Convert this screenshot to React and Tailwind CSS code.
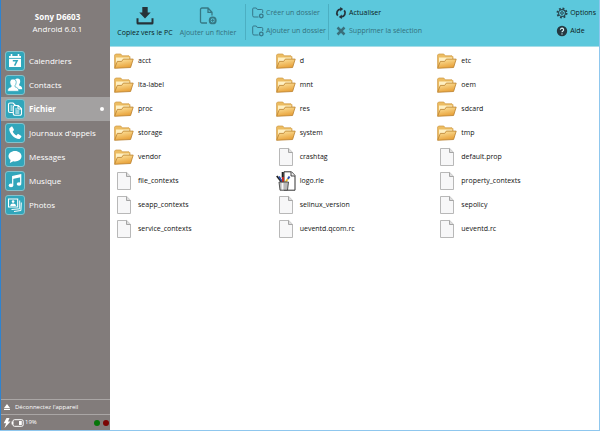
import React from "react";

function Download() {
  return (
    <svg viewBox="0 0 18 18" className="h-[18px] w-[18px]" fill="#263238">
      <path d="M6.3 0h5.4v5.5h3L9 11.6 3.3 5.5h3z" />
      <path d="M.5 11.3h2v3.9h13v-3.9h2V16a1.5 1.5 0 0 1-1.5 1.5H2A1.5 1.5 0 0 1 .5 16z" />
    </svg>
  );
}

function AddFile() {
  return (
    <svg viewBox="0 0 18 18" className="h-[18px] w-[18px]" fill="none" stroke="#367884" strokeWidth="1.3">
      <path d="M8 16H3a1.500 1.500 0 0 1-1.500-1.500V2.500A1.500 1.500 0 0 1 3 1h6l4 4.300V8.500M9 1v4.300h4" />
      <circle cx="13.700" cy="13.400" r="3" strokeWidth="1.900" />
      <path d="M13.700 11.800v3.200M12.100 13.400h3.200" strokeWidth="1" />
    </svg>
  );
}

function AddFolder() {
  return (
    <svg viewBox="0 0 12 12" className="h-3 w-3" fill="none" stroke="#36788a" strokeWidth="1">
      <path d="M6.500 10H2A1.300 1.300 0 0 1 .7 8.700V2A1 1 0 0 1 1.700 1h2.600l1 1.500h4.400a1 1 0 0 1 1 1V6" />
      <circle cx="9.300" cy="9" r="1.800" strokeWidth="1.300" />
    </svg>
  );
}

function Refresh() {
  return (
    <svg viewBox="0 0 12 12" className="h-3 w-3" fill="none" stroke="#26323a" strokeWidth="1.800">
      <path d="M2.800 8.700A4 4 0 0 1 6 2.100M9.200 3.300A4 4 0 0 1 6 9.900" />
      <path d="M5.200 0l3 2-3 2.400zM6.800 7.600l-3 2.300 3 2.100z" fill="#26323a" stroke="none" />
    </svg>
  );
}

function Cross() {
  return (
    <svg viewBox="0 0 12 12" className="h-3 w-3" stroke="#3a6f7b" strokeWidth="2.500">
      <path d="M2.500 2.500l7 7M9.500 2.500l-7 7" />
    </svg>
  );
}

function Gear() {
  return (
    <svg viewBox="0 0 12 12" className="h-3 w-3" fill="none" stroke="#26414a">
      <circle cx="6" cy="6" r="4.600" strokeWidth="1.800" strokeDasharray="1.806 1.806" />
      <circle cx="6" cy="6" r="3.400" strokeWidth="1.100" />
      <circle cx="6" cy="6" r="1.300" strokeWidth="1" />
    </svg>
  );
}

function Help() {
  return (
    <svg viewBox="0 0 12 12" className="h-3 w-3" fill="none">
      <circle cx="6" cy="6" r="5.200" fill="#253840" />
      <path d="M4.400 4.800a1.600 1.600 0 1 1 2.500 1.300c-.6.400-.9.600-.9 1.200" stroke="#d6f3f8" strokeWidth="1.200" />
      <circle cx="6" cy="8.900" r=".7" fill="#d6f3f8" />
    </svg>
  );
}

function FolderIcon() {
  return (
    <svg viewBox="0 0 20 16" className="h-4 w-5">
      <defs>
        <linearGradient id="folderFront" x1="0" y1="0" x2="0.400" y2="1">
          <stop offset="0" stopColor="#ffe9a6" />
          <stop offset="1" stopColor="#e8a23a" />
        </linearGradient>
      </defs>
      <path d="M.6 14.500V2l1-1h5.200l1.400 1.800H15l1 1V13z" fill="#edbd62" stroke="#cf9a45" strokeWidth=".7" />
      <path d="M2 4.500h13.200V12H2z" fill="#fff0c2" />
      <path d="M.6 15.300l2.700-6.900h4.400l1.600-2.300h9.900l-2.600 8.400z" fill="url(#folderFront)" stroke="#b97f2c" strokeWidth=".8" />
    </svg>
  );
}

function FileIcon() {
  return (
    <svg viewBox="0 0 20 20" className="h-5 w-5">
      <path d="M3.500 1.500h9.200l3.800 3.800v13.200h-13z" fill="#f7f7f8" stroke="#b0b0b0" strokeWidth=".9" />
      <path d="M12.500 1.500v4h4" fill="#ddd" stroke="#9d9d9d" strokeWidth=".9" />
    </svg>
  );
}

function ArtIcon() {
  return (
    <svg viewBox="0 0 20 20" className="h-5 w-5">
      <path d="M8 .8h7.500L19 4.500v14.700H8z" fill="#fff" stroke="#333" />
      <path d="M15 1v4h4" fill="#eee" stroke="#333" strokeWidth=".9" />
      <path d="M.8 5l4.700 6" stroke="#222" strokeWidth="1.800" />
      <path d="M3 5.500l3.500 5.500" stroke="#2c50ac" strokeWidth="1.600" />
      <path d="M6.700 1v6" stroke="#222" strokeWidth="2" />
      <path d="M7 6v5" stroke="#c82d25" strokeWidth="2" />
      <path d="M13.500 5.500L11.800 8" stroke="#2c50ac" strokeWidth="2" />
      <path d="M11.800 8L9.500 11" stroke="#e9bd2c" strokeWidth="1.800" />
      <path d="M3 11h9.500l-1 8.200H4z" fill="#b9b9b9" stroke="#444" strokeWidth=".9" />
      <path d="M6.500 12v6.500" stroke="#f6f6f6" strokeWidth="1.800" />
    </svg>
  );
}

const glyphs = {
  calendar: (
    <>
      <path d="M2 3h12v11H2z" fill="#fff" />
      <path d="M4.500 1v3M11.500 1v3" stroke="#fff" strokeWidth="1.600" />
      <path d="M2 5.400h12" stroke="#31a6bb" strokeWidth=".9" />
      <path d="M5.800 7.700h4.300L7.600 12.600" fill="none" stroke="#31a6bb" strokeWidth="1.500" />
    </>
  ),
  contacts: (
    <>
      <path d="M10.500 1.500c1.900 0 2.800 1.300 2.700 3 0 1.100-.4 2.200-1 2.800v1.200c2.100.8 3 1.600 3 3.700H8V2.700c.6-.8 1.400-1.200 2.500-1.200z" fill="#fff" />
      <path d="M6 2c2.200 0 3.300 1.500 3.200 3.500 0 1.300-.6 2.400-1.200 3.100v1.200c2.500.8 3.800 1.900 3.800 4.500H.5c0-2.600 1.100-3.700 3.600-4.500V8.600C3.400 7.900 2.900 6.800 2.900 5.500 2.800 3.500 3.900 2 6 2z" fill="#fff" stroke="#31a6bb" strokeWidth=".7" />
    </>
  ),
  file: (
    <g fill="none" stroke="#fff" strokeWidth="1.100">
      <path d="M6 11.500H3A1.500 1.500 0 0 1 1.500 10V3.500A1.500 1.500 0 0 1 3 2h3l2.500 2.500M3.500 5h2M3.500 7h2M3.500 9h2" />
      <path d="M7.500 4.500h3.700l3.300 3.200v5a1.500 1.500 0 0 1-1.500 1.500H7.800a1.500 1.500 0 0 1-1.500-1.500V6a1.500 1.500 0 0 1 1.200-1.500zM11 4.500V8h3.500M8.300 8h1.500M8.300 10h4M8.300 12h4" />
    </g>
  ),
  phone: (
    <path d="M4.200 1.800L2.300 3.500c-.5 4.700 5.500 10.900 10.200 10.500l1.800-2.100c.2-.5.100-.9-.3-1.200l-2.300-1.500c-.4-.3-.9-.2-1.200.1l-1 1.100C7.700 9.500 6.400 8.100 5.700 6.500l1-1.100c.3-.3.300-.7.100-1.100L5.500 2c-.3-.5-.8-.6-1.300-.2z" fill="#fff" />
  ),
  message: (
    <path d="M8 2c3.700 0 6.500 2.300 6.500 5.200S11.700 12.400 8 12.400c-.6 0-1.200 0-1.700-.2L2.800 14l.8-3.100C2.300 10 1.500 8.700 1.500 7.200 1.500 4.300 4.300 2 8 2z" fill="#fff" />
  ),
  music: (
    <>
      <path d="M5.700 12V3.500l8-1.700v8.700" fill="none" stroke="#fff" strokeWidth="1.200" />
      <path d="M5.700 3.500l8-1.700v2.500l-8 1.700z" fill="#fff" />
      <ellipse cx="4" cy="12.400" rx="2.300" ry="1.800" fill="#fff" />
      <ellipse cx="12" cy="11" rx="2.300" ry="1.800" fill="#fff" />
    </>
  ),
  photo: (
    <>
      <path d="M1.500 2h9.200v8H1.500z" fill="none" stroke="#fff" strokeWidth="1.100" />
      <circle cx="6.100" cy="4.600" r="1.300" fill="#fff" />
      <path d="M3.200 9c.2-2 1.300-2.600 2.900-2.600S8.800 7 9 9z" fill="#fff" />
      <path d="M12.700 3.500v8.300L4.500 12.500M14.300 5.500l-.4 8L7 14.500" fill="none" stroke="#fff" strokeWidth="1" />
    </>
  ),
};

const nav = [
  ["Calendriers", "calendar"],
  ["Contacts", "contacts"],
  ["Fichier", "file"],
  ["Journaux d'appels", "phone"],
  ["Messages", "message"],
  ["Musique", "music"],
  ["Photos", "photo"],
];

function NavItem({ label, glyph, active }) {
  return (
    <li>
      <button
        type="button"
        aria-current={active ? "page" : undefined}
        className={`flex h-6 w-full items-center gap-1 pr-1 pl-1 text-left text-[8px] text-white ${active ? "bg-[#a3a1a1] font-bold" : ""}`}
      >
        <span className="flex size-5 shrink-0 items-center justify-center rounded-[3px] border border-[#84c1cb] bg-[#31a6bb]">
          <svg viewBox="0 0 16 16" className="size-4">{glyphs[glyph]}</svg>
        </span>
        <span className="flex-1 whitespace-nowrap">{label}</span>
        {active && <span className="mr-0.5 size-1 rounded-full bg-white" />}
      </button>
    </li>
  );
}

function Sidebar() {
  return (
    <aside className="flex w-[110px] shrink-0 flex-col border-l border-[#2f83cf] bg-[#827c7b] text-white">
      <header className="flex h-[49px] flex-col pt-[11px] pl-1 text-center leading-3">
        <h1 className="text-[8px] font-bold">Sony D6603</h1>
        <p className="text-[8px]">Android 6.0.1</p>
      </header>
      <nav>
        <ul>
          {nav.map(([label, glyph]) => (
            <NavItem key={label} label={label} glyph={glyph} active={label === "Fichier"} />
          ))}
        </ul>
      </nav>
      <footer className="mt-auto">
        <button type="button" className="flex h-[15px] w-full items-center gap-1 border-t border-[#aaa6a5] pl-0.5 text-[6px] whitespace-nowrap">
          <svg viewBox="0 0 8 8" className="size-2" fill="#fff">
            <path d="M4 1l3 4H1zM1 5.800h6V7H1z" />
          </svg>
          Déconnectez l'appareil
        </button>
        <div className="flex h-4 items-center border-t border-[#aaa6a5] pl-0.5 text-[6px]">
          <svg viewBox="0 0 8 10" className="h-2.5 w-2" fill="#fff">
            <path d="M3.500 0h3L5 3.500h2.500L1.500 10l1.600-4.700H.7z" />
          </svg>
          <svg viewBox="0 0 13 8" className="mr-px h-2 w-[13px]">
            <rect x="2" y=".7" width="10.200" height="6.600" rx="1.500" fill="none" stroke="#fff" />
            <path d="M.6 2.500H2v3H.6zM8 2h2.800v4H8z" fill="#fff" />
          </svg>
          <span>19%</span>
          <span className="mr-[3px] ml-auto size-1.5 rounded-full bg-[#067508]" />
          <span className="mr-px size-1.5 rounded-full bg-[#7b0404]" />
        </div>
      </footer>
    </aside>
  );
}

function SmallAction({ icon, children, muted }) {
  return (
    <button
      type="button"
      className={`flex h-[18px] items-center gap-0.5 whitespace-nowrap ${muted ? "text-[#34717d]" : "text-[#0c1a20]"}`}
    >
      {icon}
      {children}
    </button>
  );
}

function Toolbar() {
  return (
    <div role="toolbar" className="flex h-[47px] items-start border-b border-[#a6dde8] bg-[#5cc8dc] pt-1 text-[7px] leading-3">
      <button type="button" className="ml-[5px] flex w-[60px] flex-col items-center gap-0.5 pt-[3px] whitespace-nowrap text-[#0c1a20]">
        <Download />
        Copiez vers le PC
      </button>
      <button type="button" className="ml-[3px] flex w-[60px] flex-col items-center gap-0.5 pt-[3px] whitespace-nowrap text-[#34717d]">
        <AddFile />
        Ajouter un fichier
      </button>
      <div className="ml-[7px] w-[84px] border-x border-[#4cafc2] pl-1.5">
        <SmallAction icon={<AddFolder />} muted>Créer un dossier</SmallAction>
        <SmallAction icon={<AddFolder />} muted>Ajouter un dossier</SmallAction>
      </div>
      <div className="ml-[6px]">
        <SmallAction icon={<Refresh />}>Actualiser</SmallAction>
        <SmallAction icon={<Cross />} muted>Supprimer la sélection</SmallAction>
      </div>
      <div className="mr-[3px] ml-auto">
        <SmallAction icon={<Gear />}>Options</SmallAction>
        <SmallAction icon={<Help />}>Aide</SmallAction>
      </div>
    </div>
  );
}

const folders = ["acct", "d", "etc", "lta-label", "mnt", "oem", "proc", "res", "sdcard", "storage", "system", "tmp", "vendor"];
const files = [
  "crashtag", "default.prop", "file_contexts", "logo.rle", "property_contexts", "seapp_contexts",
  "selinux_version", "sepolicy", "service_contexts", "ueventd.qcom.rc", "ueventd.rc",
];

function Entry({ name, icon }) {
  return (
    <li>
      <button type="button" className="flex h-6 items-center gap-1 text-left text-[7px] text-[#111]">
        {icon}
        {name}
      </button>
    </li>
  );
}

export default function App() {
  return (
    <div className="flex min-h-screen border-r border-b border-[#8fc7ee] bg-white font-['Open_Sans','Noto_Sans',sans-serif]">
      <Sidebar />
      <main className="min-w-0 flex-1 bg-white">
        <Toolbar />
        <ul className="grid grid-cols-[repeat(auto-fill,minmax(160px,1fr))] pt-0.5 pl-1">
          {folders.map((name) => (
            <Entry key={name} name={name} icon={<FolderIcon />} />
          ))}
          {files.map((name) => (
            <Entry key={name} name={name} icon={name === "logo.rle" ? <ArtIcon /> : <FileIcon />} />
          ))}
        </ul>
      </main>
    </div>
  );
}
